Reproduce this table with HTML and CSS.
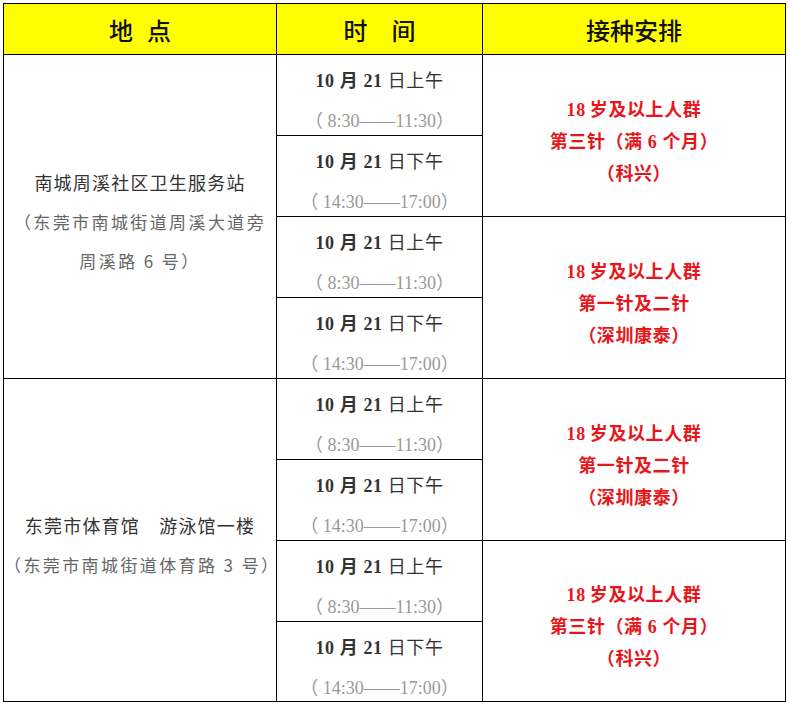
FILE: index.html
```html
<!DOCTYPE html>
<html lang="zh-CN">
<head>
<meta charset="utf-8">
<title>接种安排</title>
<link rel="stylesheet" href="styles.css">
</head>
<body>
<div class="sheet">
  <div class="cell head"><span class="hw">地</span><span class="hw">点</span></div>
  <div class="cell head">时　间</div>
  <div class="cell head">接种安排</div>

  <div class="cell place p1">
    <div class="pname">南城周溪社区卫生服务站</div>
    <div class="paddr">（东莞市南城街道周溪大道旁</div>
    <div class="paddr">周溪路 6 号）</div>
  </div>
  <div class="cell time r1"><div class="day"><b>10 月 21</b> 日上午</div><div class="hours">（ 8:30——11:30）</div></div>
  <div class="cell plan g1">
    <div><b class="n">18</b>岁及以上人群</div>
    <div>第三针（满 <b>6</b> 个月）</div>
    <div>（科兴）</div>
  </div>
  <div class="cell time r2"><div class="day"><b>10 月 21</b> 日下午</div><div class="hours">（ 14:30——17:00）</div></div>
  <div class="cell time r3"><div class="day"><b>10 月 21</b> 日上午</div><div class="hours">（ 8:30——11:30）</div></div>
  <div class="cell plan g2">
    <div><b class="n">18</b>岁及以上人群</div>
    <div>第一针及二针</div>
    <div>（深圳康泰）</div>
  </div>
  <div class="cell time r4"><div class="day"><b>10 月 21</b> 日下午</div><div class="hours">（ 14:30——17:00）</div></div>

  <div class="cell place p2">
    <div class="pname">东莞市体育馆　游泳馆一楼</div>
    <div class="paddr">（东莞市南城街道体育路 3 号）</div>
  </div>
  <div class="cell time r5"><div class="day"><b>10 月 21</b> 日上午</div><div class="hours">（ 8:30——11:30）</div></div>
  <div class="cell plan g3">
    <div><b class="n">18</b>岁及以上人群</div>
    <div>第一针及二针</div>
    <div>（深圳康泰）</div>
  </div>
  <div class="cell time r6"><div class="day"><b>10 月 21</b> 日下午</div><div class="hours">（ 14:30——17:00）</div></div>
  <div class="cell time r7"><div class="day"><b>10 月 21</b> 日上午</div><div class="hours">（ 8:30——11:30）</div></div>
  <div class="cell plan g4">
    <div><b class="n">18</b>岁及以上人群</div>
    <div>第三针（满 <b>6</b> 个月）</div>
    <div>（科兴）</div>
  </div>
  <div class="cell time r8"><div class="day"><b>10 月 21</b> 日下午</div><div class="hours">（ 14:30——17:00）</div></div>
</div>
</body>
</html>
```
FILE: styles.css
```css
html, body {
  margin: 0;
  padding: 0;
  background: #fff;
}
body {
  padding: 3px 0 0 3px;
  font-family: "Liberation Serif", "Noto Sans CJK SC", serif;
}
.sheet {
  display: grid;
  grid-template-columns: 273px 206px 303px;
  grid-template-rows: 51px 81px 81px 81px 81px 81px 81px 81px 80px;
  width: 782px;
  border-left: 1px solid #000;
  border-top: 1px solid #000;
}
.cell {
  box-sizing: border-box;
  border-right: 1px solid #000;
  border-bottom: 1px solid #000;
  display: flex;
  flex-direction: column;
  align-items: center;
  justify-content: center;
}
.head {
  background: #ffff00;
  font-family: "Noto Sans CJK SC", sans-serif;
  font-weight: 500;
  font-size: 24px;
  color: #111;
  white-space: pre;
  flex-direction: row;
  gap: 14px;
}
.place {
  grid-column: 1;
  font-family: "Noto Sans CJK SC", sans-serif;
}
.p1 { grid-row: 2 / 6; padding-top: 10px; }
.p2 { grid-row: 6 / 10; padding-top: 9px; }
.pname {
  font-size: 18px;
  line-height: 39px;
  color: #333;
  letter-spacing: 1.2px;
}
.paddr {
  font-size: 17px;
  line-height: 39px;
  color: #666;
  letter-spacing: 2.4px;
}
.time {
  grid-column: 2;
  justify-content: flex-start;
  padding-top: 6px;
}
.r1 { grid-row: 2; }
.r2 { grid-row: 3; }
.r3 { grid-row: 4; }
.r4 { grid-row: 5; }
.r5 { grid-row: 6; }
.r6 { grid-row: 7; }
.r7 { grid-row: 8; }
.r8 { grid-row: 9; }
.day {
  font-size: 18px;
  line-height: 40px;
  color: #333;
  letter-spacing: 0.6px;
}
.day b { font-weight: 700; }
.hours {
  font-size: 18px;
  line-height: 40px;
  color: #999;
}
.plan {
  grid-column: 3;
  padding-top: 12px;
  color: #e8161b;
  font-weight: 700;
  font-size: 18px;
  line-height: 32px;
  letter-spacing: 0.6px;
}
.plan .n { margin-right: 4px; }
.g1 { grid-row: 2 / 4; }
.g2 { grid-row: 4 / 6; }
.g3 { grid-row: 6 / 8; }
.g4 { grid-row: 8 / 10; }
```
